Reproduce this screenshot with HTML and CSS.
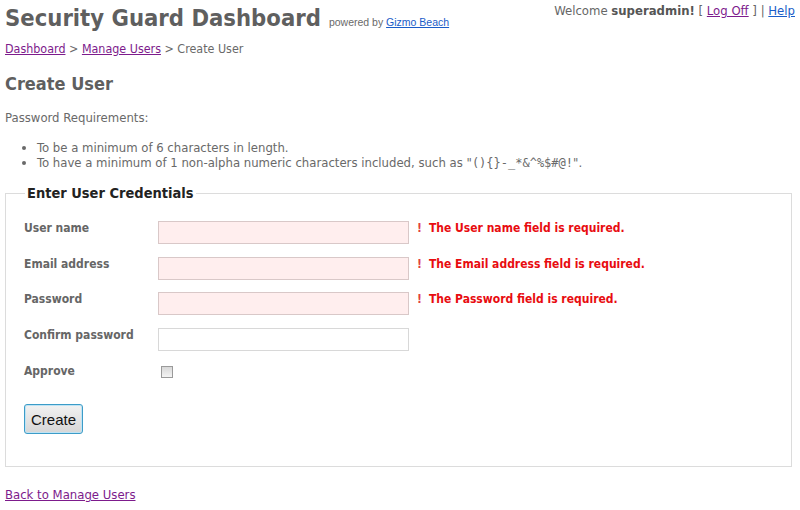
FILE: index.html
```html
<!DOCTYPE html>
<html>
<head>
<meta charset="utf-8">
<link rel="stylesheet" href="styles.css">
</head>
<body>
<div class="page">
  <header class="header">
    <div class="brand">
      <h1 class="title">Security Guard Dashboard</h1>
      <span class="powered">powered by <a href="#" class="blue">Gizmo Beach</a></span>
    </div>
    <div class="login">Welcome <b>superadmin!</b> [ <a href="#" class="visited">Log Off</a> ] | <a href="#" class="blue">Help</a></div>
  </header>
  <nav class="crumbs"><a href="#" class="visited">Dashboard</a> &gt; <a href="#" class="visited">Manage Users</a> &gt; Create User</nav>
  <h2 class="h2">Create User</h2>
  <p class="req">Password Requirements:</p>
  <ul class="list">
    <li>To be a minimum of 6 characters in length.</li>
    <li>To have a minimum of 1 non-alpha numeric characters included, such as "<span class="mono">(){}-_*&amp;^%$#@!</span>".</li>
  </ul>
  <fieldset class="fs">
    <legend class="legend">Enter User Credentials</legend>
    <div class="row">
      <label class="lbl">User name</label>
      <input class="inp err" type="text">
      <span class="msg"><span class="bang">!</span>The User name field is required.</span>
    </div>
    <div class="row">
      <label class="lbl">Email address</label>
      <input class="inp err" type="text">
      <span class="msg"><span class="bang">!</span>The Email address field is required.</span>
    </div>
    <div class="row">
      <label class="lbl">Password</label>
      <input class="inp err" type="password">
      <span class="msg"><span class="bang">!</span>The Password field is required.</span>
    </div>
    <div class="row">
      <label class="lbl">Confirm password</label>
      <input class="inp" type="password">
    </div>
    <div class="row">
      <label class="lbl">Approve</label>
      <span class="cb"></span>
    </div>
    <button class="btn" type="button">Create</button>
  </fieldset>
  <a href="#" class="visited back">Back to Manage Users</a>
</div>
</body>
</html>
```
FILE: styles.css
```css
html, body { margin: 0; padding: 0; background: #fff; }
body { font-family: "DejaVu Sans Condensed", "DejaVu Sans", Tahoma, sans-serif; font-stretch: condensed; color: #696969; font-size: 13px; }
.page { padding: 0 5px; }
.header { display: flex; justify-content: space-between; align-items: flex-start; }
.brand { display: flex; align-items: baseline; }
.title { margin: 0; font-size: 23.6px; font-weight: bold; color: #5f5f5f; line-height: 36px; }
.powered { font-size: 10.5px; margin-left: 8px; color: #6a6a6a; font-family: "Liberation Sans", Arial, sans-serif; font-stretch: normal; }
.blue { color: #1a5cc8; }
.visited { color: #7d1b8c; }
.login { font-size: 13px; padding-top: 3px; line-height: 16px; color: #666; }
.login b { color: #555; }
.crumbs { font-size: 12.4px; margin-top: 5px; line-height: 16px; }
.h2 { margin: 15px 0 0; font-size: 18px; font-weight: bold; color: #5f5f5f; line-height: 24px; }
.req { margin: 14px 0 0; line-height: 16px; }
.list { margin: 14px 0 0; padding-left: 32px; line-height: 15px; list-style: disc; }
.mono { font-family: "DejaVu Sans Mono", monospace; font-size: 12px; }
.fs { margin: 14px 3px 0 0; border: 1px solid #dcdcdc; padding: 20px 18px 32px; }
.legend { font-size: 14.5px; font-weight: bold; color: #222; padding: 0 2px; margin-left: 1px; }
.row { display: flex; align-items: flex-start; height: 35.7px; }
.lbl { width: 134px; font-weight: bold; font-size: 12px; color: #666; line-height: 14px; }
.inp { width: 251px; height: 23px; box-sizing: border-box; border: 1px solid #d8d8d8; margin: 0; padding: 2px 4px; background: #fff; }
.inp.err { background: #ffeeee; border-color: #d9c8c8; }
.msg { color: #e80c10; font-weight: bold; font-size: 12px; margin-left: 8px; line-height: 14px; display: flex; }
.bang { color: #e04040; margin-right: 7px; }
.cb { width: 10px; height: 10px; border: 1px solid #9a9a9a; background: linear-gradient(#d8d8d8, #f4f4f4); margin-left: 3px; margin-top: 2px; }
.btn { font-family: "Liberation Sans", Arial, sans-serif; font-size: 15px; color: #111; width: 59px; height: 30px; border: 1px solid #3c9cc8; border-radius: 3px; background: linear-gradient(#f2f2f2, #d6d6d6); margin-top: 5px; padding: 0; box-shadow: inset 0 0 0 1px #bfe3f4; }
.back { display: inline-block; margin-top: 20px; font-size: 13px; }
```
